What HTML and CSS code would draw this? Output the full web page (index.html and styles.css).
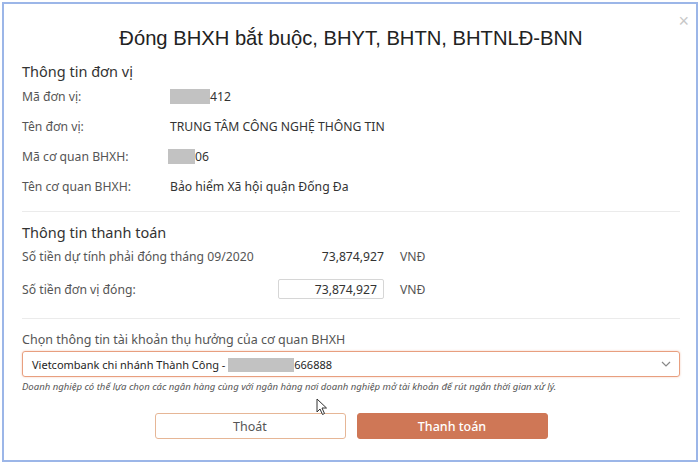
FILE: index.html
```html
<!DOCTYPE html>
<html lang="vi">

<head>
    <meta charset="UTF-8">
    <meta name="viewport" content="width=device-width, initial-scale=1.0">
    <title>Đóng BHXH</title>
    <link rel="stylesheet" href="styles.css">
</head>

<body>
    <div class="dialog">
        <!-- Close button -->
        <div class="close-btn">&times;</div>

        <h1 class="dialog-title">Đóng BHXH bắt buộc, BHYT, BHTN, BHTNLĐ-BNN</h1>

        <!-- Thông tin đơn vị -->
        <div class="section">
            <h2 class="section-title">Thông tin đơn vị</h2>
            <div class="info-row">
                <span class="label">Mã đơn vị:</span>
                <span class="value"><span class="masked masked-unit"></span>412</span>
            </div>
            <div class="info-row">
                <span class="label">Tên đơn vị:</span>
                <span class="value">TRUNG TÂM CÔNG NGHỆ THÔNG TIN</span>
            </div>
            <div class="info-row">
                <span class="label">Mã cơ quan BHXH:</span>
                <span class="value"><span class="masked masked-agency"></span>06</span>
            </div>
            <div class="info-row">
                <span class="label">Tên cơ quan BHXH:</span>
                <span class="value">Bảo hiểm Xã hội quận Đống Đa</span>
            </div>
        </div>

        <hr class="divider">

        <!-- Thông tin thanh toán -->
        <div class="section">
            <h2 class="section-title">Thông tin thanh toán</h2>
            <div class="amount-row">
                <span class="label">Số tiền dự tính phải đóng tháng 09/2020</span>
                <span class="amount">73,874,927</span>
                <span class="currency">VNĐ</span>
            </div>
            <div class="amount-row amount-row-input">
                <span class="label">Số tiền đơn vị đóng:</span>
                <input type="text" class="amount-input" value="73,874,927">
                <span class="currency">VNĐ</span>
            </div>
        </div>

        <hr class="divider">

        <!-- Tài khoản thụ hưởng -->
        <div class="section">
            <p class="select-label">Chọn thông tin tài khoản thụ hưởng của cơ quan BHXH</p>
            <div class="bank-select">
                <span class="bank-text">Vietcombank chi nhánh Thành Công - <span class="masked masked-account"></span>666888</span>
                <svg class="chevron" width="10" height="6" viewBox="0 0 10 6">
                    <path d="M1 1 L5 5 L9 1" fill="none" stroke="#888" stroke-width="1.2"/>
                </svg>
            </div>
            <p class="hint">Doanh nghiệp có thể lựa chọn các ngân hàng cùng với ngân hàng nơi doanh nghiệp mở tài khoản để rút ngắn thời gian xử lý.</p>
        </div>

        <div class="actions">
            <button class="btn btn-cancel">Thoát</button>
            <button class="btn btn-pay">Thanh toán</button>
        </div>

        <!-- Mouse cursor -->
        <svg class="cursor" width="12" height="18" viewBox="0 0 12 18">
            <path d="M1 1 L1 14 L4 11 L6.5 16.5 L8.5 15.5 L6 10 L10.5 10 Z" fill="#fff" stroke="#333" stroke-width="1"/>
        </svg>
    </div>
</body>

</html>
```

FILE: styles.css
```css
body {
    margin: 0;
    padding: 0;
    background-color: #fff;
    font-family: 'Noto Sans', sans-serif;
    color: #333;
}

.dialog {
    position: relative;
    box-sizing: border-box;
    width: 696px;
    height: 460px;
    margin: 2px;
    border: 2px solid #9cb6e8;
    padding: 21px 16px 0 18px;
}

.close-btn {
    position: absolute;
    top: 8px;
    right: 7px;
    font-size: 18px;
    line-height: 18px;
    color: #c8c8c8;
    font-family: 'Liberation Sans', sans-serif;
}

.dialog-title {
    margin: 0;
    font-family: 'Liberation Sans', Arial, sans-serif;
    font-weight: normal;
    font-size: 20.2px;
    line-height: 26px;
    text-align: center;
    color: #222;
}

.section-title {
    margin: 10px 0 0;
    font-size: 14.5px;
    font-weight: normal;
    line-height: 20px;
    color: #333;
}

.info-row {
    display: grid;
    grid-template-columns: 148px 1fr;
    align-items: center;
    height: 30px;
    font-size: 12.2px;
}

.label {
    color: #555;
}

.value {
    display: flex;
    align-items: center;
    color: #333;
}

.masked {
    display: inline-block;
    height: 15px;
    background-color: #c2c2c2;
}

.masked-unit {
    width: 40px;
}

.masked-agency {
    width: 27px;
    margin-left: -2px;
}

.masked-account {
    width: 66px;
    height: 14px;
    vertical-align: -3px;
}

.divider {
    margin: 10px 0 0;
    border: none;
    border-top: 1px solid #ebebeb;
}

.amount-row {
    display: grid;
    grid-template-columns: 256px 106px 16px auto;
    align-items: center;
    height: 28px;
    font-size: 12.2px;
}

.amount-row-input {
    height: 38px;
}

.amount {
    text-align: right;
    color: #333;
}

.currency {
    grid-column: 4;
    color: #555;
}

.amount-input {
    box-sizing: border-box;
    width: 106px;
    height: 20px;
    padding: 0 6px;
    border: 1px solid #d6d6d6;
    border-radius: 2px;
    font-family: inherit;
    font-size: 12.2px;
    text-align: right;
    color: #333;
}

.select-label {
    margin: 12px 0 0;
    font-size: 12.5px;
    line-height: 18px;
    color: #555;
}

.bank-select {
    display: flex;
    align-items: center;
    justify-content: space-between;
    box-sizing: border-box;
    height: 26px;
    margin-top: 2px;
    padding: 0 8px 0 9px;
    border: 1px solid #e89f7f;
    border-radius: 3px;
    box-shadow: 0 0 2px rgba(232, 140, 100, 0.5);
}

.bank-text {
    font-size: 11px;
    color: #1e1e1e;
}

.hint {
    margin: 3px 0 0;
    font-size: 9.55px;
    font-style: italic;
    color: #555;
}

.actions {
    display: flex;
    justify-content: center;
    gap: 11px;
    margin-top: 20px;
}

.btn {
    box-sizing: border-box;
    width: 191px;
    height: 26px;
    border-radius: 3px;
    font-family: inherit;
    font-size: 12.5px;
    cursor: pointer;
}

.btn-cancel {
    background-color: #fff;
    border: 1px solid #e6b696;
    color: #555;
}

.btn-pay {
    background-color: #cf7756;
    border: 1px solid #cf7756;
    color: #fff;
    font-weight: 500;
}

.cursor {
    position: absolute;
    left: 312px;
    top: 394px;
}
```
